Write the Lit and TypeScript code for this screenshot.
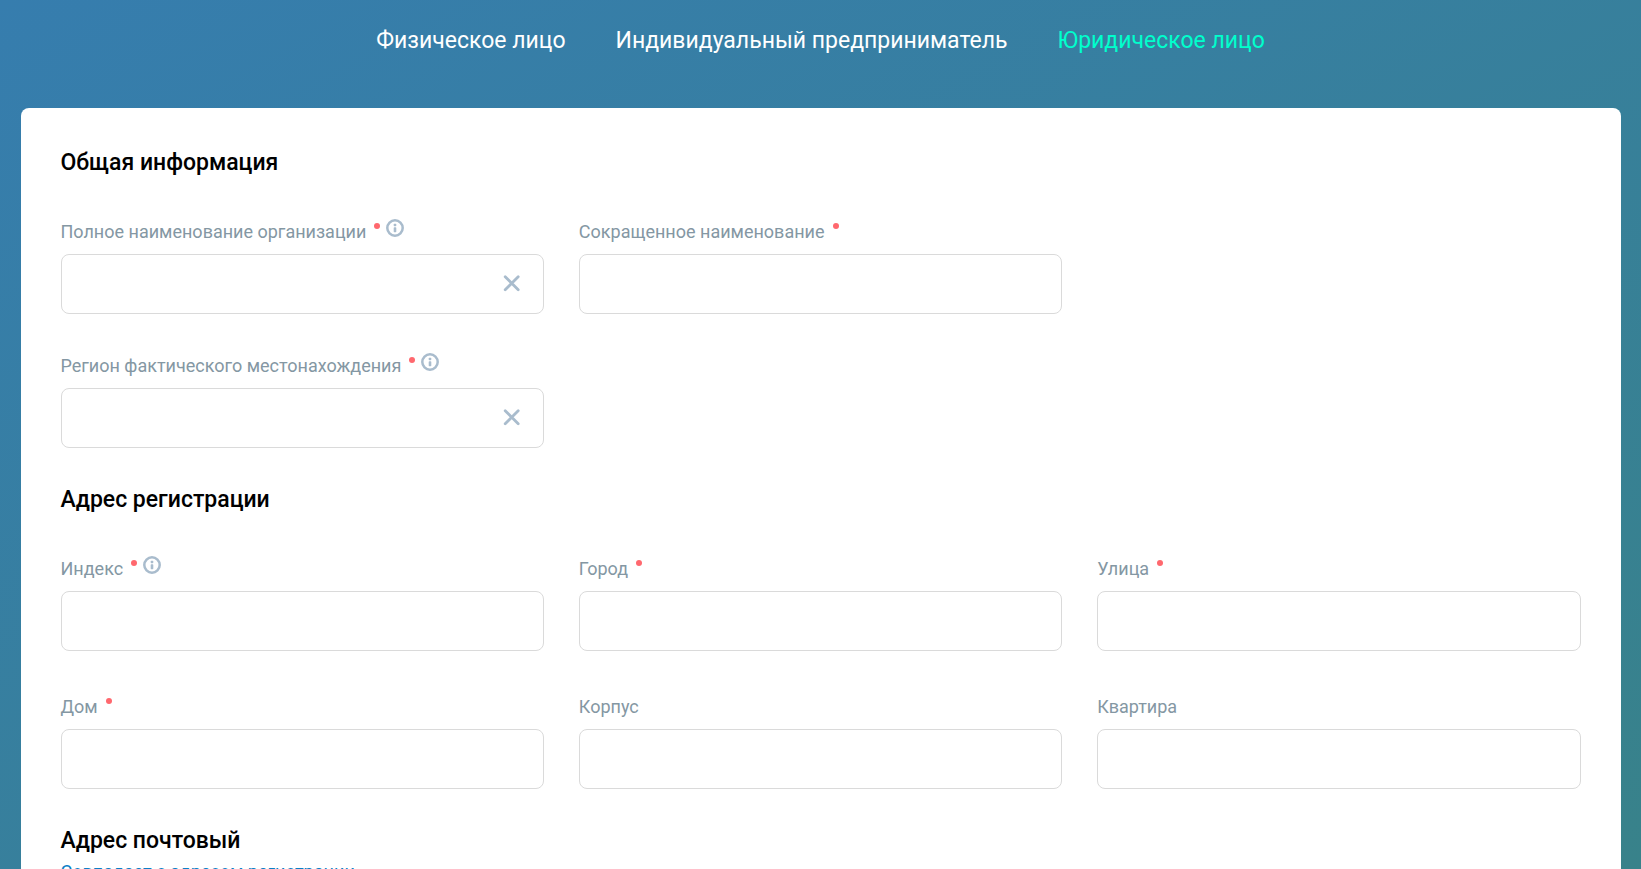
import { LitElement, html, css, svg, nothing } from "lit";
import { customElement, property, state } from "lit/decorators.js";

const infoIcon = svg`<svg class="info" viewBox="0 0 18 18" aria-hidden="true">
  <circle cx="9" cy="9" r="7.7" fill="none" stroke="#a9bccd" stroke-width="2.5"/>
  <rect x="7.7" y="4.8" width="2.6" height="2.4" rx=".7" fill="#a9bccd"/>
  <rect x="7.7" y="8.3" width="2.6" height="5" rx=".7" fill="#a9bccd"/>
</svg>`;

@customElement("form-field")
export class FormField extends LitElement {
  @property() label = "";
  @property({ type: Boolean }) required = false;
  @property({ type: Boolean }) hint = false;
  @property({ type: Boolean }) clearable = false;
  @state() private value = "";

  static styles = css`
    :host { display: block; min-width: 0; }
    .caption {
      display: flex;
      align-items: flex-start;
      height: 32px;
      font-size: 18px;
      line-height: 20px;
      color: #8497a3;
    }
    .dot {
      flex: none;
      width: 6px;
      height: 6px;
      margin: 1px 0 0 8px;
      border-radius: 50%;
      background: #ff686e;
    }
    .hint {
      flex: none;
      display: block;
      margin: -3px 0 0 6px;
      padding: 0;
      border: 0;
      background: none;
      cursor: pointer;
    }
    .info { display: block; width: 18px; height: 18px; }
    .box {
      display: flex;
      align-items: center;
      box-sizing: border-box;
      height: 60px;
      border: 1px solid #dadada;
      border-radius: 8px;
      background: #fff;
    }
    .box:focus-within { border-color: #367dae; }
    .input {
      flex: 1;
      min-width: 0;
      height: 100%;
      box-sizing: border-box;
      padding: 0 20px;
      border: 0;
      outline: 0;
      background: none;
      font: inherit;
      font-size: 18px;
      color: #000;
    }
    .clear {
      flex: none;
      margin-right: 22px;
      padding: 0;
      border: 0;
      background: none;
      cursor: pointer;
    }
    .cross { display: block; width: 18px; height: 18px; }
  `;

  render() {
    return html`
      <div class="caption">
        <label for="control">${this.label}</label>
        ${this.required ? html`<span class="dot"></span>` : nothing}
        ${this.hint ? html`<button class="hint" type="button" aria-label="Подсказка">${infoIcon}</button>` : nothing}
      </div>
      <div class="box">
        <input class="input" id="control" type="text" .value=${this.value} ?required=${this.required}
          @input=${(e: Event) => (this.value = (e.target as HTMLInputElement).value)} />
        ${this.clearable
          ? html`<button class="clear" type="button" aria-label="Очистить" @click=${() => (this.value = "")}>
              <svg class="cross" viewBox="0 0 18 18" aria-hidden="true">
                <path d="M2.2 1.8 15.2 14.8M15.2 1.8 2.2 14.8" fill="none" stroke="#a9bccd" stroke-width="2.8" stroke-linecap="round"/>
              </svg>
            </button>`
          : nothing}
      </div>
    `;
  }
}

const TABS = ["Физическое лицо", "Индивидуальный предприниматель", "Юридическое лицо"];

@customElement("app-root")
export class AppRoot extends LitElement {
  @state() private active = 2;

  static styles = css`
    :host {
      display: block;
      height: 100vh;
      overflow: hidden;
      box-sizing: border-box;
      padding: 0 20px;
      background: linear-gradient(to bottom right, #367dae, #38828a);
      font-family: Roboto, "Noto Sans", sans-serif;
    }
    .tabs {
      display: flex;
      flex-wrap: wrap;
      justify-content: center;
      gap: 50px;
      padding: 24px 0 50px;
    }
    .tab {
      font-size: 23px;
      line-height: 34px;
      color: #fff;
      text-decoration: none;
    }
    .tab.active { color: #0fc; }
    .card {
      max-width: 1600px;
      box-sizing: border-box;
      margin: 0 auto;
      padding: 38px 40px 40px;
      border-radius: 8px;
      background: #fff;
    }
    .title {
      margin: 0;
      font-size: 23px;
      line-height: 34px;
      font-weight: 500;
      color: #000;
    }
    .grid {
      display: grid;
      grid-template-columns: repeat(3, minmax(0, 1fr));
      column-gap: 35px;
      margin: 42px 0 35px;
    }
    .general { row-gap: 42px; }
    .address { row-gap: 46px; }
    .wide { grid-column: 1; }
    .same {
      display: inline-block;
      margin-top: 4px;
      font-size: 18px;
      line-height: 20px;
      color: #0b7fc7;
      text-decoration: none;
    }
  `;

  render() {
    return html`
      <nav class="tabs">
        ${TABS.map(
          (name, i) => html`<a class="tab ${i === this.active ? "active" : ""}" href="#"
            @click=${(e: Event) => { e.preventDefault(); this.active = i; }}>${name}</a>`
        )}
      </nav>
      <form class="card">
        <h2 class="title">Общая информация</h2>
        <div class="grid general">
          <form-field label="Полное наименование организации" required hint clearable></form-field>
          <form-field label="Сокращенное наименование" required></form-field>
          <form-field class="wide" label="Регион фактического местонахождения" required hint clearable></form-field>
        </div>
        <h2 class="title">Адрес регистрации</h2>
        <div class="grid address">
          <form-field label="Индекс" required hint></form-field>
          <form-field label="Город" required></form-field>
          <form-field label="Улица" required></form-field>
          <form-field label="Дом" required></form-field>
          <form-field label="Корпус"></form-field>
          <form-field label="Квартира"></form-field>
        </div>
        <h2 class="title">Адрес почтовый</h2>
        <a class="same" href="#">Совпадает с адресом регистрации</a>
      </form>
    `;
  }
}
